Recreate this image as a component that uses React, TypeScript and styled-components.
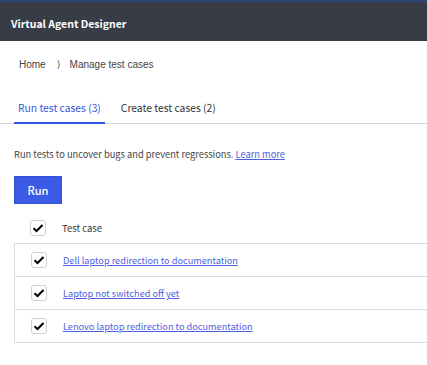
import React from "react";
import styled, { createGlobalStyle } from "styled-components";

const Global = createGlobalStyle`
  html, body { margin: 0; padding: 0; background: #fff; }
  body { font-family: "Noto Sans CJK SC", "Noto Sans", sans-serif; overflow: hidden; }
`;

const Page = styled.div`
  width: 427px;
  height: 365px;
  overflow: hidden;
  display: flex;
  flex-direction: column;
`;

const Header = styled.header`
  background: #373c47;
  border-top: 2px solid #2d4675;
  display: flex;
  align-items: center;
  padding: 3px 0 0 11px;
  box-sizing: border-box;
  height: 41px;
  color: #fff;
  font-weight: 700;
  font-size: 10.5px;
`;

const Breadcrumb = styled.nav`
  display: flex;
  align-items: center;
  padding: 15px 0 0 19px;
  height: 17px;
  font-family: "Liberation Sans", Arial, sans-serif;
  font-size: 10px;
  color: #444;
`;

const Crumb = styled.span``;

const Sep = styled.span`
  margin: 0 9px 0 11px;
  font-family: "DejaVu Sans", sans-serif;
  font-size: 10px;
  color: #555;
`;

const Tabs = styled.div`
  margin-top: 27px;
  display: flex;
  gap: 12px;
  padding-left: 14px;
  border-bottom: 1px solid #d6d6d6;
`;

const Tab = styled.div<{ $active?: boolean }>`
  padding: 0 4px 7px;
  font-size: 10.3px;
  line-height: 15px;
  color: ${(p) => (p.$active ? "#3656e0" : "#333")};
  border-bottom: 2px solid ${(p) => (p.$active ? "#3656e0" : "transparent")};
  margin-bottom: -1px;
`;

const Content = styled.div`
  padding: 23px 0 0 14px;
`;

const Desc = styled.p`
  margin: 0;
  font-size: 9.3px;
  line-height: 14px;
  color: #444;
`;

const Link = styled.a`
  color: #4d61e0;
  text-decoration: underline;
`;

const RunButton = styled.button`
  display: block;
  margin-top: 15px;
  width: 48px;
  height: 28px;
  background: #3b5be7;
  border: 1px solid #3451d6;
  color: #fff;
  font-family: inherit;
  font-size: 11px;
  font-weight: 500;
  padding: 0;
`;

const HeadRow = styled.div`
  display: flex;
  align-items: center;
  height: 30px;
  margin-top: 9px;
  padding-left: 16px;
  gap: 16px;
  font-size: 9.5px;
  color: #333;
`;

const Table = styled.div`
  margin-top: 0;
  border: 1px solid #dcdcdc;
  border-right: none;
  margin-right: -2px;
`;

const Row = styled.div`
  display: flex;
  align-items: center;
  height: 32px;
  padding-left: 16px;
  gap: 16px;
  font-size: 9.2px;
  & + & {
    border-top: 1px solid #dcdcdc;
  }
`;

const Box = styled.span`
  width: 14px;
  height: 14px;
  border: 1px solid #d0d0d0;
  border-radius: 3px;
  background: #fff;
  display: flex;
  align-items: center;
  justify-content: center;
  flex-shrink: 0;
`;

const Check = () => (
  <Box>
    <svg width="12" height="12" viewBox="0 0 12 12">
      <polyline points="1.5,6.3 4.5,9 10.5,3" fill="none" stroke="#000" strokeWidth="2" />
    </svg>
  </Box>
);

const cases = [
  "Dell laptop redirection to documentation",
  "Laptop not switched off yet",
  "Lenovo laptop redirection to documentation",
];

export default function App() {
  return (
    <Page>
      <Global />
      <Header>Virtual Agent Designer</Header>
      <Breadcrumb>
        <Crumb>Home</Crumb>
        <Sep>⟩</Sep>
        <Crumb>Manage test cases</Crumb>
      </Breadcrumb>
      <Tabs>
        <Tab $active>Run test cases (3)</Tab>
        <Tab>Create test cases (2)</Tab>
      </Tabs>
      <Content>
        <Desc>
          Run tests to uncover bugs and prevent regressions. <Link href="#">Learn more</Link>
        </Desc>
        <RunButton>Run</RunButton>
        <HeadRow>
          <Check />
          <span>Test case</span>
        </HeadRow>
        <Table>
          {cases.map((c) => (
            <Row key={c}>
              <Check />
              <Link href="#">{c}</Link>
            </Row>
          ))}
        </Table>
      </Content>
    </Page>
  );
}
